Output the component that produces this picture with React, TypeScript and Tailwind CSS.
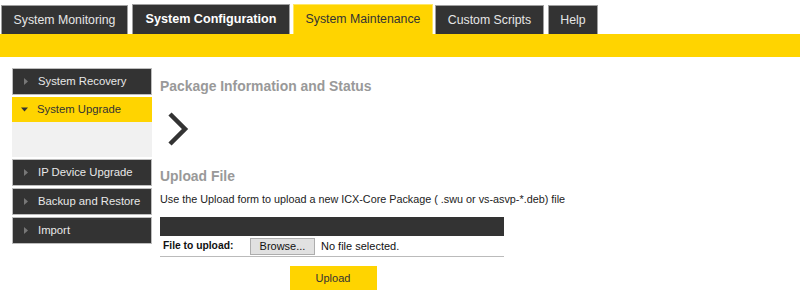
import React from "react";

const tabs = [
  { label: "System Monitoring", kind: "dark", cls: "w-[127px]" },
  { label: "System Configuration", kind: "bold", cls: "ml-[4px] w-[158px]" },
  { label: "System Maintenance", kind: "active", cls: "ml-[3px] w-[140px]" },
  { label: "Custom Scripts", kind: "dark", cls: "ml-[2px] w-[109px]" },
  { label: "Help", kind: "dark", cls: "ml-[4px] w-[50px]" },
];

const menuTop = ["System Recovery"];
const menuBottom = ["IP Device Upgrade", "Backup and Restore", "Import"];

function Arrow({ down = false }: { down?: boolean }) {
  if (down) {
    return (
      <svg width="7" height="7" viewBox="0 0 7 7" className="shrink-0">
        <path d="M0 1.5 L7 1.5 L3.5 5.5 Z" fill="#333" />
      </svg>
    );
  }
  return (
    <svg width="7" height="7" viewBox="0 0 7 7" className="shrink-0">
      <path d="M2 0 L6 3.5 L2 7 Z" fill="#777" />
    </svg>
  );
}

function MenuItem({ label }: { label: string }) {
  return (
    <div className="flex h-[27px] items-center gap-[9px] border border-[#bdbdbd] bg-[#333] pl-[9px] text-[11.3px] text-[#e8e8e8]">
      <Arrow />
      <span>{label}</span>
    </div>
  );
}

export default function App() {
  return (
    <div className="h-[296px] w-[800px] overflow-hidden bg-white font-['Liberation_Sans',Arial,sans-serif]">
      <div className="flex h-[34px] items-end pl-[1px]">
        {tabs.map((t) =>
          t.kind === "active" ? (
            <div
              key={t.label}
              className={`flex h-[30px] items-center justify-center border border-b-0 border-[#ffe866] bg-[#ffd400] text-[12.3px] text-[#333] ${t.cls}`}
            >
              {t.label}
            </div>
          ) : (
            <div
              key={t.label}
              className={`flex items-center justify-center border border-b-0 border-[#a0a0a0] bg-[#333] ${t.cls} ${
                t.kind === "bold" ? "h-[30px] text-[12.6px] font-bold text-white" : "h-[29px] text-[12.3px] text-[#e6e6e6]"
              }`}
            >
              {t.label}
            </div>
          )
        )}
      </div>
      <div className="h-[23px] bg-[#ffd400]" />

      <div className="flex gap-[8px] pl-[12px] pt-[11px]">
        <div className="flex w-[140px] flex-col gap-[2px]">
          {menuTop.map((m) => (
            <MenuItem key={m} label={m} />
          ))}
          <div>
            <div className="flex h-[25px] items-center gap-[9px] bg-[#ffd400] pl-[9px] text-[11.3px] text-[#333]">
              <Arrow down />
              <span>System Upgrade</span>
            </div>
            <div className="h-[35px] bg-[#f1f1f1]" />
          </div>
          {menuBottom.map((m) => (
            <MenuItem key={m} label={m} />
          ))}
        </div>

        <div className="flex flex-col pt-[10px]">
          <h2 className="text-[13.9px] font-bold leading-[17px] text-[#999]">Package Information and Status</h2>
          <svg width="24" height="36" viewBox="0 0 24 36" className="ml-[7px] mt-[16px]">
            <path d="M3 3 L18 18 L3 33" fill="none" stroke="#333" strokeWidth="4.5" />
          </svg>
          <h2 className="mt-[21px] text-[13.9px] font-bold leading-[17px] text-[#999]">Upload File</h2>
          <p className="mt-[8px] text-[10.8px] leading-[13px] text-[#222]">
            Use the Upload form to upload a new ICX-Core Package ( .swu or vs-asvp-*.deb) file
          </p>
          <div className="mt-[11px] w-[344px]">
            <div className="h-[19px] bg-[#333]" />
            <div className="flex h-[21px] items-center border-b border-[#bbb] pl-[3px]">
              <span className="w-[87px] text-[10.3px] font-bold text-[#111]">File to upload:</span>
              <button className="h-[17px] w-[65px] border border-[#adadad] bg-[#e1e1e1] text-[11px] leading-none text-[#111]">
                Browse...
              </button>
              <span className="ml-[6px] text-[11px] text-[#111]">No file selected.</span>
            </div>
            <div className="flex justify-center pt-[9px] pl-[2px]">
              <button className="h-[24px] w-[87px] bg-[#ffd400] text-[11px] text-[#333]">Upload</button>
            </div>
          </div>
        </div>
      </div>
    </div>
  );
}
